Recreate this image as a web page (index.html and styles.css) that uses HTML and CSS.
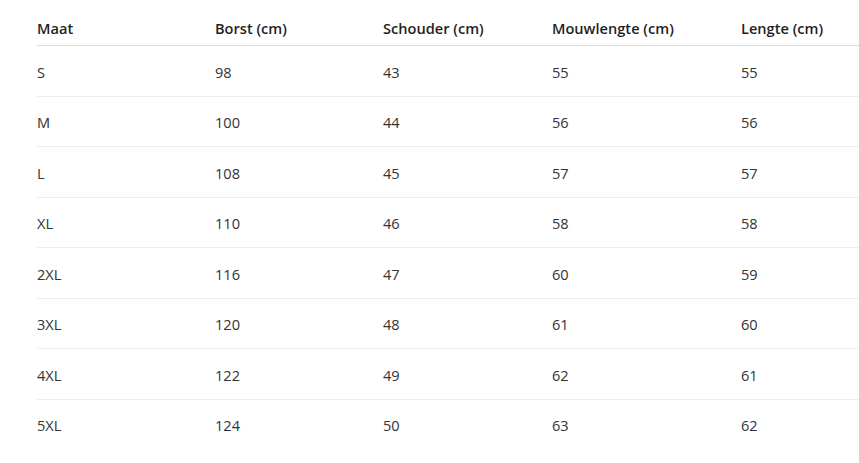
FILE: index.html
```html
<!DOCTYPE html>
<html lang="nl">
<head>
<meta charset="utf-8">
<title>Maattabel</title>
<link rel="stylesheet" href="styles.css">
</head>
<body>
<div class="wrap">
<table class="size-table">
  <colgroup>
    <col class="c1"><col class="c2"><col class="c3"><col class="c4"><col class="c5">
  </colgroup>
  <thead>
    <tr><th>Maat</th><th>Borst (cm)</th><th>Schouder (cm)</th><th>Mouwlengte (cm)</th><th>Lengte (cm)</th></tr>
  </thead>
  <tbody>
    <tr><td>S</td><td>98</td><td>43</td><td>55</td><td>55</td></tr>
    <tr><td>M</td><td>100</td><td>44</td><td>56</td><td>56</td></tr>
    <tr><td>L</td><td>108</td><td>45</td><td>57</td><td>57</td></tr>
    <tr><td>XL</td><td>110</td><td>46</td><td>58</td><td>58</td></tr>
    <tr><td>2XL</td><td>116</td><td>47</td><td>60</td><td>59</td></tr>
    <tr><td>3XL</td><td>120</td><td>48</td><td>61</td><td>60</td></tr>
    <tr><td>4XL</td><td>122</td><td>49</td><td>62</td><td>61</td></tr>
    <tr><td>5XL</td><td>124</td><td>50</td><td>63</td><td>62</td></tr>
  </tbody>
</table>
</div>
</body>
</html>
```
FILE: styles.css
```css
html, body {
  margin: 0;
  padding: 0;
  background: #ffffff;
}
body {
  font-family: "Open Sans", "Noto Sans", "Liberation Sans", sans-serif;
  font-size: 14.6px;
  color: #333333;
  overflow: hidden;
}
.wrap {
  padding: 10px 0 0 37px;
}
.size-table {
  border-collapse: collapse;
  table-layout: fixed;
  width: 822px;
}
.c1 { width: 178px; }
.c2 { width: 168px; }
.c3 { width: 169px; }
.c4 { width: 189px; }
.c5 { width: 118px; }
.size-table th {
  text-align: left;
  font-weight: 600;
  color: #1f1f1f;
  line-height: 19px;
  padding: 9px 0 7px 0;
  border-bottom: 1px solid #dadada;
  white-space: nowrap;
}
.size-table td {
  line-height: 19.5px;
  padding: 16.5px 0 13.5px 0;
  border-bottom: 1px solid #eeeeee;
  white-space: nowrap;
}
.size-table tbody tr:last-child td {
  border-bottom: none;
}
```
